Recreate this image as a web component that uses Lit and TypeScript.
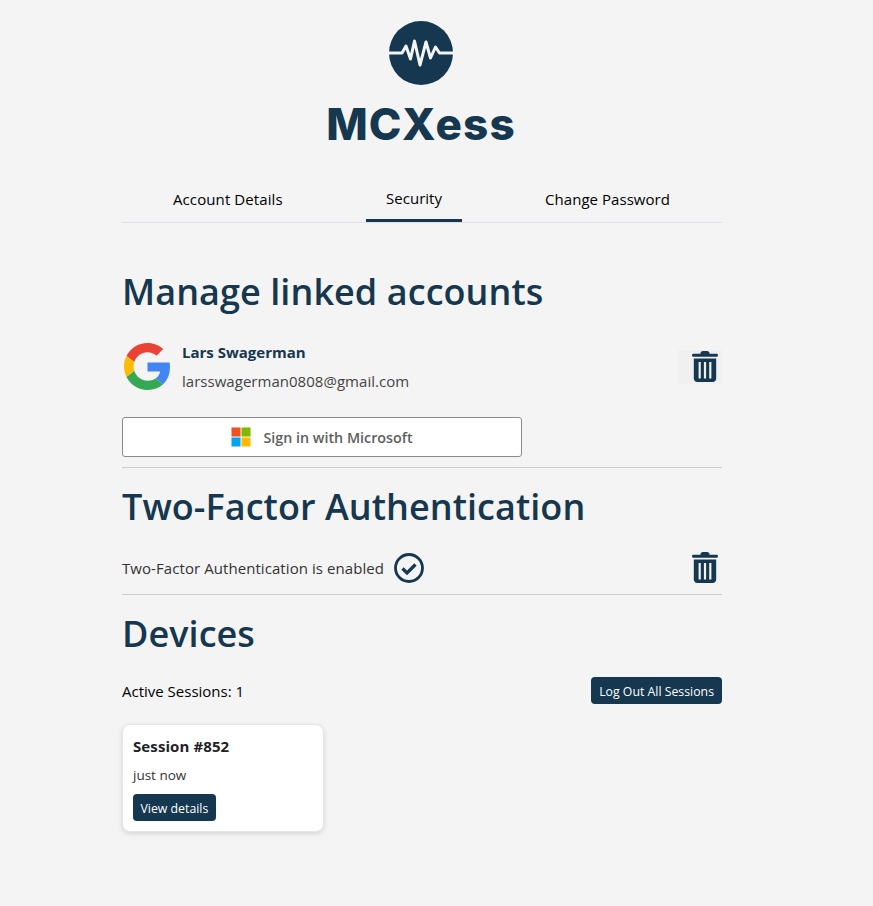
import { LitElement, html, css } from "lit";
import { customElement } from "lit/decorators.js";

const trash = html`<svg class="trash" width="26" height="31" viewBox="0 0 26 31"><path fill="#15374f" d="M8.500 2C8.500 1 9.500 0 11 0h4c1.500 0 2.500 1 2.500 2v.8h7c.9 0 1.500.6 1.500 1.400s-.6 1.500-1.500 1.500H1.500C.6 5.700 0 5 0 4.200S.6 2.800 1.500 2.800h7z"/><path fill="#15374f" fill-rule="evenodd" d="M1.800 7.500h22.400v20c0 1.900-1.500 3.500-3.500 3.500H5.300c-2 0-3.500-1.600-3.500-3.500zM6.600 11v16.500h2.200V11zM11.900 11v16.500h2.200V11zM17.200 11v16.500h2.200V11z"/></svg>`;

@customElement("app-root")
export class AppRoot extends LitElement {
  static styles = css`
    :host { display: block; background: #f4f4f4; min-height: 906px; font-family: "Open Sans", "Noto Sans", sans-serif; color: #212529; }
    .page { width: 844px; display: flex; flex-direction: column; align-items: center; }
    .col { width: 600px; display: flex; flex-direction: column; }
    .logo { display: flex; flex-direction: column; align-items: center; padding-top: 21px; height: 166px; box-sizing: border-box; margin-right: 2px; }
    .wordmark { font-family: Inter, sans-serif; font-weight: 800; font-size: 44px; line-height: 48px; color: #15374f; margin-top: 15px; letter-spacing: 1.2px; }
    .tabs { height: 57px; border-bottom: 1px solid #dee2e6; box-sizing: border-box; font-size: 15px; color: #000; position: relative; }
    .tab { position: absolute; top: 0; height: 56px; display: flex; align-items: center; justify-content: center; padding-top: 10px; box-sizing: border-box; }
    .t1 { left: 51px; letter-spacing: 0.1px; }
    .t2 { left: 244px; width: 96px; border-bottom: 3px solid #15374f; }
    .t3 { left: 423px; letter-spacing: 0.05px; }
    h2 { margin: 0; font-weight: 600; color: #15374f; font-family: "Open Sans", sans-serif; font-size: 36px; line-height: 48px; letter-spacing: 0.06px; }
    .h1 { margin-top: 45px; }
    .account { display: flex; align-items: center; margin-top: 21px; height: 58px; }
    .google { margin-left: 2px; }
    .who { margin-left: 11px; display: flex; flex-direction: column; }
    .name { font-weight: 700; font-size: 15px; color: #15374f; line-height: 20px; }
    .mail { font-size: 15px; color: #444; line-height: 20px; margin-top: 9px; letter-spacing: 0.03px; }
    .spacer { flex: 1; }
    .trashbox { width: 44px; height: 34px; background: #f0f0f0; display: flex; align-items: center; justify-content: flex-end; padding-right: 4px; box-sizing: border-box; margin-top: 1px; }
    .ms { margin-top: 22px; width: 400px; height: 40px; box-sizing: border-box; background: #fff; border: 1px solid #8b8b8b; border-radius: 3px; display: flex; align-items: center; justify-content: center; gap: 12px; font-size: 14.3px; font-weight: 600; color: #5e5e5e; }
    hr { border: 0; border-top: 1px solid #ccc; margin: 0; width: 100%; }
    .hr1 { margin-top: 10px; }
    .h2 { margin-top: 15px; }
    .tfa { display: flex; align-items: center; margin-top: 18px; height: 38px; font-size: 15px; letter-spacing: 0.07px; color: #333; gap: 10px; }
    .tfa .trash { margin: 0 4px 2px 0; }
    .hr2 { margin-top: 7px; }
    .h3 { margin-top: 15px; }
    .sessions { display: flex; align-items: center; justify-content: space-between; margin-top: 19px; font-size: 15px; color: #000; height: 27px; }
    .btn { background: #15374f; color: #fff; border: 0; border-radius: 4px; font: 400 12.3px "Open Sans", sans-serif; height: 27px; padding: 1px 8px 0; display: inline-flex; align-items: center; }
    .card { margin-top: 20px; width: 202px; height: 108px; box-sizing: border-box; background: #fff; border-radius: 8px; border: 1px solid #e6e6e6; box-shadow: 0 2px 5px rgba(0,0,0,.12); padding: 10px; display: flex; flex-direction: column; align-items: flex-start; }
    .title { font-weight: 700; font-size: 15px; line-height: 22px; color: #222; letter-spacing: 0.1px; }
    .ago { font-size: 13.5px; line-height: 18px; margin-top: 9px; color: #333; }
    .card .btn { margin-top: 10px; padding: 1px 7.5px 0; }
  `;

  render() {
    return html`<div class="page">
      <div class="logo">
        <svg width="64" height="64" viewBox="0 0 64 64"><circle cx="32" cy="32" r="32" fill="#15374f"/><path d="M0 32H13L17 25 21.500 38 25.500 20 31 44 37 21 41.500 37 46.500 26 50.500 32H64" fill="none" stroke="#f4f4f4" stroke-width="3" stroke-linejoin="round"/></svg>
        <div class="wordmark">MCXess</div>
      </div>
      <div class="col">
        <div class="tabs">
          <div class="tab t1">Account Details</div>
          <div class="tab t2">Security</div>
          <div class="tab t3">Change Password</div>
        </div>
        <h2 class="h1">Manage linked accounts</h2>
        <div class="account">
          <svg class="google" width="47" height="47" viewBox="0 0 48 48"><path fill="#EA4335" d="M24 9.500c3.540 0 6.710 1.220 9.210 3.600l6.850-6.850C35.900 2.380 30.470 0 24 0 14.620 0 6.510 5.380 2.560 13.220l7.980 6.190C12.430 13.720 17.740 9.500 24 9.500z"/><path fill="#4285F4" d="M46.980 24.550c0-1.570-.15-3.090-.38-4.550H24v9.020h12.940c-.58 2.960-2.260 5.480-4.780 7.180l7.730 6c4.510-4.180 7.090-10.360 7.090-17.650z"/><path fill="#FBBC05" d="M10.530 28.590c-.48-1.450-.76-2.990-.76-4.590s.27-3.140.76-4.590l-7.980-6.190C.92 16.460 0 20.120 0 24c0 3.880.92 7.540 2.560 10.780l7.970-6.190z"/><path fill="#34A853" d="M24 48c6.480 0 11.930-2.130 15.890-5.810l-7.730-6c-2.150 1.450-4.920 2.300-8.160 2.300-6.260 0-11.570-4.220-13.470-9.910l-7.980 6.190C6.510 42.620 14.620 48 24 48z"/></svg>
          <div class="who"><div class="name">Lars Swagerman</div><div class="mail">larsswagerman0808@gmail.com</div></div>
          <div class="spacer"></div>
          <div class="trashbox">${trash}</div>
        </div>
        <div class="ms">
          <svg width="20" height="20" viewBox="0 0 21 21"><rect x="0.500" y="0.500" width="9.500" height="9.500" fill="#f25022"/><rect x="11" y="0.500" width="9.500" height="9.500" fill="#7fba00"/><rect x="0.500" y="11" width="9.500" height="9.500" fill="#00a4ef"/><rect x="11" y="11" width="9.500" height="9.500" fill="#ffb900"/></svg>
          <span>Sign in with Microsoft</span>
        </div>
        <hr class="hr1" />
        <h2 class="h2">Two-Factor Authentication</h2>
        <div class="tfa">
          <span>Two-Factor Authentication is enabled</span>
          <svg width="30" height="30" viewBox="0 0 30 30"><circle cx="15" cy="15" r="13.500" fill="none" stroke="#15374f" stroke-width="2.800"/><path d="M8.500 15.500l4.500 4.500 8.500-8.500" fill="none" stroke="#15374f" stroke-width="3.200"/></svg>
          <div class="spacer"></div>
          ${trash}
        </div>
        <hr class="hr2" />
        <h2 class="h3">Devices</h2>
        <div class="sessions"><span>Active Sessions: 1</span><button class="btn">Log Out All Sessions</button></div>
        <div class="card">
          <div class="title">Session #852</div>
          <div class="ago">just now</div>
          <button class="btn">View details</button>
        </div>
      </div>
    </div>`;
  }
}
